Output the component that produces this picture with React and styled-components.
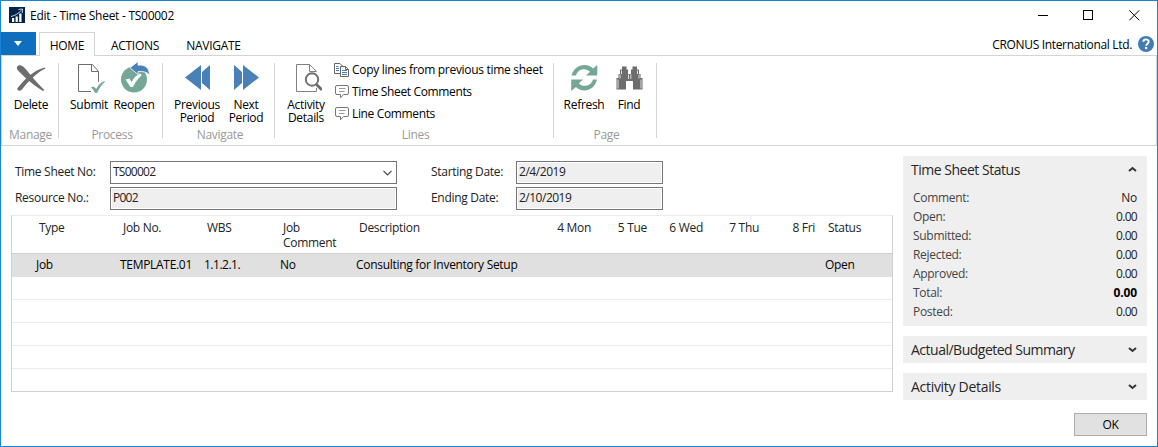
import React from "react";
import styled, { createGlobalStyle } from "styled-components";

const Global = createGlobalStyle`
  * { box-sizing: border-box; }
  body { margin: 0; background: #fff; }
`;

const Window = styled.div`
  width: 1158px;
  height: 447px;
  border: 1px solid #1883d7;
  background: #fff;
  display: flex;
  flex-direction: column;
  font-family: "Open Sans", "Noto Sans", sans-serif;
  font-size: 12px;
  line-height: 16px;
  color: #000;
  overflow: hidden;
`;

const Text = styled.span`
  letter-spacing: ${(p) => p.$ls ?? -0.3}px;
  white-space: nowrap;
`;

/* ---------- title bar ---------- */
const TitleBar = styled.header`
  height: 31px;
  flex: none;
  display: flex;
  align-items: center;
  padding: 0 17px 3px 8px;
`;
const Title = styled(Text)`
  margin-left: 5px;
  padding-top: 2px;
  flex: 1;
`;
const WindowButtons = styled.div`
  display: flex;
  gap: 35px;
  svg { display: block; }
`;

/* ---------- tabs ---------- */
const TabRow = styled.nav`
  height: 24px;
  flex: none;
  display: flex;
  border-bottom: 1px solid #d4d4d4;
`;
const FileButton = styled.button`
  width: 35px;
  height: 23px;
  margin-right: 3px;
  border: 0;
  padding: 0;
  background: #106ebe;
  display: flex;
  align-items: center;
  justify-content: center;
`;
const Tab = styled.div`
  width: ${(p) => p.$w}px;
  height: 24px;
  text-align: center;
  line-height: 25px;
  border: 1px solid ${(p) => (p.$active ? "#d4d4d4" : "transparent")};
  border-bottom: 0;
  background: ${(p) => (p.$active ? "#fff" : "transparent")};
`;
const Company = styled.div`
  margin-left: auto;
  display: flex;
  align-items: center;
  gap: 6px;
  padding: 2px 3px 0 0;
  svg { display: block; margin-bottom: 2px; }
`;

/* ---------- ribbon ---------- */
const Ribbon = styled.section`
  height: 90px;
  flex: none;
  display: flex;
  border: 1px solid #d4d4d4;
  border-width: 0 1px 1px 1px;
  padding-top: 7px;
`;
const Group = styled.div`
  width: ${(p) => p.$w}px;
  height: 75px;
  border-right: 1px solid #d4d4d4;
  display: flex;
  flex-direction: column;
`;
const GroupBody = styled.div`
  height: 64px;
  flex: none;
  margin-top: -2px;
  padding-left: ${(p) => p.$pad}px;
  display: flex;
`;
const GroupLabel = styled.div`
  text-align: center;
  color: #999;
  line-height: 16px;
  padding: 2px 0 0 3px;
  ${Group}:first-child & { padding-left: 1px; }
`;
const BigButton = styled.div`
  width: ${(p) => p.$w}px;
  display: flex;
  flex-direction: column;
  align-items: center;
  text-align: center;
  line-height: 13px;
  svg { display: block; flex: none; margin-bottom: 5px; }
`;
const SmallButtons = styled.div`
  margin: -2px 0 0 3px;
`;
const SmallButton = styled.div`
  height: 22px;
  display: flex;
  align-items: center;
  gap: 2px;
`;

/* ---------- content ---------- */
const Content = styled.main`
  flex: 1;
  display: flex;
  padding: 10px 10px 0 10px;
`;
const Left = styled.div`
  width: 882px;
  margin-right: 10px;
  padding-top: 5px;
`;
const Fields = styled.div`
  display: grid;
  grid-template-columns: 95px 287px 34px 85px 147px;
  grid-auto-rows: 23px;
  row-gap: 3px;
  padding-left: 4px;
  color: #222;
`;
const FieldLabel = styled(Text)`
  grid-column: ${(p) => p.$col};
  line-height: 22px;
`;
const Field = styled.div`
  grid-column: ${(p) => p.$col};
  border: 1px solid #767676;
  background: ${(p) => (p.$editable ? "#fff" : "#efefef")};
  box-shadow: inset 0 0 0 1px #fff;
  padding: 0 4px 2px 2px;
  display: flex;
  align-items: center;
  justify-content: space-between;
  svg { margin-top: 2px; }
`;

const Grid = styled.div`
  margin-top: 5px;
  width: 882px;
  height: 177px;
  border: 1px solid #d0d0d0;
  border-top-color: #ebebeb;
`;
const columns = "84px 84px 76px 76px 117px 115px 56px 56px 56px 56px 1fr";
const HeaderRow = styled.div`
  height: 38px;
  border-bottom: 1px solid #d0d0d0;
  display: grid;
  grid-template-columns: ${columns};
  padding: 4px 0 0 27px;
  line-height: 15px;
  color: #222;
`;
const DataRow = styled.div`
  height: 23px;
  border-bottom: 1px solid ${(p) => (p.$selected ? "#e0e0e0" : "#ebebeb")};
  background: ${(p) => (p.$selected ? "#e0e0e0" : "#fff")};
  display: grid;
  grid-template-columns: ${columns};
  padding-left: 24px;
  line-height: 22px;
  &:last-child { height: 22px; border-bottom: 0; }
`;
const Cell = styled.div`
  text-align: ${(p) => (p.$right ? "right" : "left")};
  white-space: pre;
  &:last-child { padding-left: 13px; }
`;
const HeaderText = styled(Text)`
  white-space: pre;
`;

const Side = styled.aside`
  width: 244px;
  display: flex;
  flex-direction: column;
  gap: 10px;
`;
const Panel = styled.section`
  background: #efefef;
  height: ${(p) => (p.$open ? 170 : 27)}px;
  flex: none;
`;
const PanelHeader = styled.div`
  height: 27px;
  font-size: 14px;
  color: #262626;
  display: flex;
  align-items: center;
  justify-content: space-between;
  padding: 0 10px 0 8px;
`;
const Fact = styled.div`
  height: 19px;
  line-height: 19px;
  display: flex;
  justify-content: space-between;
  padding: 0 10px;
  color: #444;
`;
const Facts = styled.div`
  padding-top: 5px;
`;
const FactValue = styled(Text)`
  font-weight: ${(p) => (p.$bold ? 700 : 400)};
  color: ${(p) => (p.$bold ? "#000" : "#222")};
`;
const OkButton = styled.button`
  align-self: flex-end;
  margin-top: 3px;
  width: 73px;
  height: 23px;
  padding: 0;
  border: 1px solid #adadad;
  background: #e1e1e1;
  font: inherit;
  line-height: 20px;
`;

/* ---------- icons ---------- */
const GREY = "#6d6d6d";
const BLUE = "#4a80b8";
const TEAL = "#74a796";
const Big = (p) => <svg width="32" height="32" viewBox="0 0 32 32" {...p} />;

const AppIcon = () => (
  <svg width="16" height="16" viewBox="0 0 16 16">
    <rect width="16" height="16" fill="#03234f" />
    <path d="M3 15v-4h2.200v4zM6.600 15V9.500h2.200V15zM10.200 15V6.500h2.300V15z" fill="#fff" />
    <path d="M2 9.500C6 8.500 9 7 12 3.500M9.500 2.500l4-.5-.3 4" fill="none" stroke="#cfd8e6" strokeWidth="1" />
  </svg>
);
const DeleteIcon = () => (
  <Big>
    <path d="M2 6C3 3.600 6 3.500 8.500 5.800C13 10.500 20 20 29.300 29L28 30C20 25.500 9 16 3 9.500C2 8.500 1.700 7 2 6Z" fill={GREY} />
    <path d="M30.500 7.500C22.500 11 13.500 20 6.500 29C5 30.300 2 29.800 2.300 27.500C9 19 18 9.500 29.500 6.600Z" fill={GREY} />
  </Big>
);
const SubmitIcon = () => (
  <Big>
    <path d="M25.500 21V10.500L19.500 3.500H5.500V30.500H18M18.500 3.500V10.500H25.500" fill="none" stroke={GREY} />
    <path d="M18 26L21 25.700L23.200 28C25 24.500 27.500 21.500 31.500 20L32 20.600C28.500 24 26 28 24 32H22.500Z" fill={TEAL} />
  </Big>
);
const ReopenIcon = () => (
  <Big>
    <circle cx="16" cy="18.500" r="13" fill={TEAL} />
    <path d="M7.500 18.500L11.500 17.500L13.500 21C15.500 17 18.500 14 22.500 12.500L23.500 14.500C20 17.500 17.500 21 15 26H12.500Z" fill="#fff" />
    <path d="M12 6.800L20 0.500V4.200C26.500 3.300 31.200 6.500 31.500 14C29 11 25 10 20 10.500V13.500Z" fill={BLUE} stroke="#fff" strokeWidth=".8" />
  </Big>
);
const PrevIcon = () => (
  <Big>
    <path d="M4 16.500L20 4V29ZM21 11L29 4V29L21 22Z" fill={BLUE} />
  </Big>
);
const NextIcon = () => (
  <Big>
    <path d="M29 16.500L13 4V29ZM12 11L4 4V29L12 22Z" fill={BLUE} />
  </Big>
);
const ActivityIcon = () => (
  <Big>
    <path d="M26.500 10.500L19.500 3.500H6.500V30.500H26.500V27M19.500 3.500V10.500H26.500" fill="none" stroke="#808080" />
    <circle cx="22" cy="18.500" r="6.200" fill="#fff" stroke={GREY} strokeWidth="1.900" />
    <path d="M26.500 23.500L32 29" stroke={GREY} strokeWidth="2.800" />
  </Big>
);
const RefreshIcon = () => (
  <Big>
    <g fill={TEAL}>
      <path d="M3.500 14.500C5.500 7.500 10.500 4 16.500 4C20 4 23 5.300 25 7.500L29.300 4V14.500H18L22 10.800C18 6.500 10 7.500 8 14.500Z" />
      <path d="M29 18.500C27.500 25.500 22 29.500 16.500 29.500C13 29.500 10 28 8 26L3.200 30V18.500H15L10.800 22.500C15 26.500 23 25.500 25 18.500Z" />
    </g>
  </Big>
);
const FindIcon = () => (
  <Big>
    <path d="M9 5.500H13.500V8.500H15V13H18V8.500H19.500V5.500H24V8.500H26V13H27.500V17H29.500V28.500H20V20H13V28.500H3.500V17H5.500V13H7V8.500H9Z" fill={GREY} />
    <path d="M8.500 9.500V13M7 13.500V17.500M24.500 9.500V13M26 13.500V17.500M5 18.500V27.500M28 18.500V27.500M15.500 13.500V18M17.800 13.500V18" stroke="#fff" strokeWidth=".8" />
  </Big>
);
const CopyIcon = () => (
  <svg width="16" height="16" viewBox="0 0 16 16">
    <g fill="#fff" stroke="#666">
      <path d="M.5 1.500H6L8.500 4V11.500H.5Z" />
      <path d="M6.500 4.500H11.500L14.500 7.500V14.500H6.500Z" />
    </g>
    <path d="M2 4.500H4.500M2 6.500H5M2 8.500H5M8 8.500H13M8 10.500H13M8 12.500H13" stroke={BLUE} />
    <path d="M11.500 4.500V7.500H14.500" stroke="#666" fill="none" />
  </svg>
);
const CommentIcon = () => (
  <svg width="16" height="16" viewBox="0 0 16 16">
    <path d="M3 1.500H13Q14.500 1.500 14.500 3V9Q14.500 10.500 13 10.500H9.500L6.500 13.800V10.500H3Q1.500 10.500 1.500 9V3Q1.500 1.500 3 1.500Z" fill="#fff" stroke="#777" />
    <path d="M5 4.500H11.500M5 7.500H10.500" stroke="#999" />
  </svg>
);
const HelpIcon = () => (
  <svg width="16" height="16" viewBox="0 0 16 16">
    <circle cx="8" cy="8" r="8" fill="#427cb6" />
    <path d="M5.300 5.800C5.400 2.600 10.700 2.600 10.700 5.700C10.700 7.600 8.100 7.700 8.100 9.800" fill="none" stroke="#fff" strokeWidth="1.900" />
    <rect x="7" y="11" width="2.200" height="2.100" fill="#fff" />
  </svg>
);
const Chevron = ({ up }) => (
  <svg width="9" height="7" viewBox="0 0 9 7">
    <path d={up ? "M1 5L4.500 2L8 5" : "M1 2L4.500 5L8 2"} fill="none" stroke="#333" strokeWidth="2" />
  </svg>
);

const facts = [
  ["Comment:", "No"],
  ["Open:", "0.00"],
  ["Submitted:", "0.00"],
  ["Rejected:", "0.00"],
  ["Approved:", "0.00"],
  ["Total:", "0.00", true],
  ["Posted:", "0.00"],
];

const headers = [
  ["Type"], ["Job No."], ["WBS"], ["Job\nComment"], ["Description"],
  ["4 Mon", true], ["5 Tue", true], ["6 Wed", true], ["7 Thu", true], ["8 Fri", true], ["Status"],
];
const row = ["Job", "TEMPLATE.01", "1.1.2.1.", "No", "Consulting for Inventory Setup", "", "", "", "", "", "Open"];

const factSpacing = (value, bold) => (bold ? -0.15 : value === "No" ? -0.3 : -0.7);

export default function App() {
  return (
    <>
      <Global />
      <Window>
        <TitleBar>
          <AppIcon />
          <Title $ls={-0.27}>Edit - Time Sheet - TS00002</Title>
          <WindowButtons>
            <svg width="11" height="11"><path d="M1 5.500H11" stroke="#000" /></svg>
            <svg width="11" height="11"><rect x=".5" y=".5" width="9" height="9" fill="none" stroke="#000" /></svg>
            <svg width="11" height="11"><path d="M.3 .3L10.300 10.300M10.300 .3L.3 10.300" stroke="#000" /></svg>
          </WindowButtons>
        </TitleBar>

        <TabRow>
          <FileButton>
            <svg width="9" height="6"><path d="M0 0H8L4 5Z" fill="#fff" /></svg>
          </FileButton>
          <Tab $w={56} $active><Text>HOME</Text></Tab>
          <Tab $w={80}><Text>ACTIONS</Text></Tab>
          <Tab $w={77}><Text>NAVIGATE</Text></Tab>
          <Company>
            <Text $ls={-0.34}>CRONUS International Ltd.</Text>
            <HelpIcon />
          </Company>
        </TabRow>

        <Ribbon>
          <Group $w={57}>
            <GroupBody $pad={2}>
              <BigButton $w={54}><DeleteIcon /><Text>Delete</Text></BigButton>
            </GroupBody>
            <GroupLabel><Text>Manage</Text></GroupLabel>
          </Group>
          <Group $w={104}>
            <GroupBody $pad={8}>
              <BigButton $w={44}><SubmitIcon /><Text>Submit</Text></BigButton>
              <BigButton $w={46}><ReopenIcon /><Text>Reopen</Text></BigButton>
            </GroupBody>
            <GroupLabel><Text>Process</Text></GroupLabel>
          </Group>
          <Group $w={112}>
            <GroupBody $pad={8}>
              <BigButton $w={52}><PrevIcon /><Text>Previous</Text><Text>Period</Text></BigButton>
              <BigButton $w={46}><NextIcon /><Text>Next</Text><Text>Period</Text></BigButton>
            </GroupBody>
            <GroupLabel><Text>Navigate</Text></GroupLabel>
          </Group>
          <Group $w={279}>
            <GroupBody $pad={6}>
              <BigButton $w={50}><ActivityIcon /><Text>Activity</Text><Text>Details</Text></BigButton>
              <SmallButtons>
                <SmallButton><CopyIcon /><Text>Copy lines from previous time sheet</Text></SmallButton>
                <SmallButton><CommentIcon /><Text $ls={-0.36}>Time Sheet Comments</Text></SmallButton>
                <SmallButton><CommentIcon /><Text $ls={-0.36}>Line Comments</Text></SmallButton>
              </SmallButtons>
            </GroupBody>
            <GroupLabel><Text>Lines</Text></GroupLabel>
          </Group>
          <Group $w={103}>
            <GroupBody $pad={6}>
              <BigButton $w={48}><RefreshIcon /><Text>Refresh</Text></BigButton>
              <BigButton $w={42}><FindIcon /><Text>Find</Text></BigButton>
            </GroupBody>
            <GroupLabel><Text>Page</Text></GroupLabel>
          </Group>
        </Ribbon>

        <Content>
          <Left>
            <Fields>
              <FieldLabel $col={1}>Time Sheet No:</FieldLabel>
              <Field $col={2} $editable>
                <Text $ls={-0.75}>TS00002</Text>
                <svg width="9" height="6"><path d="M.5 .8L4.500 4.800L8.500 .8" fill="none" stroke="#444" strokeWidth="1.200" /></svg>
              </Field>
              <FieldLabel $col={4}>Starting Date:</FieldLabel>
              <Field $col={5}><Text $ls={-0.45}>2/4/2019</Text></Field>
              <FieldLabel $col={1}>Resource No.:</FieldLabel>
              <Field $col={2}><Text $ls={-0.75}>P002</Text></Field>
              <FieldLabel $col={4}>Ending Date:</FieldLabel>
              <Field $col={5}><Text $ls={-0.5}>2/10/2019</Text></Field>
            </Fields>
            <Grid>
              <HeaderRow>
                {headers.map(([h, right]) => (
                  <Cell key={h} $right={right}><HeaderText>{h}</HeaderText></Cell>
                ))}
              </HeaderRow>
              <DataRow $selected>
                {row.map((c, i) => (
                  <Cell key={i}><Text $ls={i === 2 ? -0.5 : -0.3}>{c}</Text></Cell>
                ))}
              </DataRow>
              <DataRow /><DataRow /><DataRow /><DataRow /><DataRow />
            </Grid>
          </Left>
          <Side>
            <Panel $open>
              <PanelHeader><Text $ls={-0.48}>Time Sheet Status</Text><Chevron up /></PanelHeader>
              <Facts>
                {facts.map(([k, v, bold]) => (
                  <Fact key={k}><Text>{k}</Text><FactValue $bold={bold} $ls={factSpacing(v, bold)}>{v}</FactValue></Fact>
                ))}
              </Facts>
            </Panel>
            <Panel><PanelHeader><Text $ls={-0.5}>Actual/Budgeted Summary</Text><Chevron /></PanelHeader></Panel>
            <Panel><PanelHeader><Text>Activity Details</Text><Chevron /></PanelHeader></Panel>
            <OkButton><Text>OK</Text></OkButton>
          </Side>
        </Content>
      </Window>
    </>
  );
}
